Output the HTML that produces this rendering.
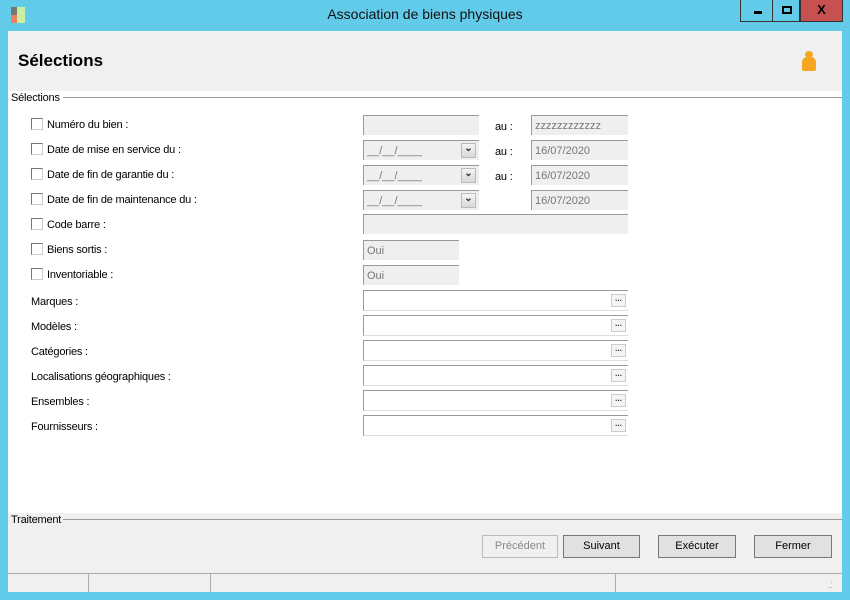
<!DOCTYPE html>
<html><head><meta charset="utf-8"><style>
*{margin:0;padding:0;box-sizing:border-box}
body{width:850px;height:600px;background:#62cbea;font-family:"Liberation Sans",sans-serif;font-size:11px;color:#000;position:relative;overflow:hidden}
.a{position:absolute}
.l{letter-spacing:-0.2px}
.title{left:0;top:6px;width:850px;text-align:center;font-size:14px;color:#111}
.cb{width:12px;height:12px;border:1px solid #777;border-right-color:#ccc;border-bottom-color:#ccc;background:#fff}
.f{background:#efefef;border-top:1px solid #999;border-left:1px solid #999;height:20px;color:#777;font-size:11px;padding:4px 0 0 3px}
.w{background:#fff;border-top:1px solid #999;border-left:1px solid #999;border-bottom:1px solid #ddd;height:21px}
.dd{width:15px;height:15px;background:linear-gradient(#f4f4f4,#d8d8d8);border:1px solid #bbb;font-size:10px;text-align:center;line-height:10px;color:#234;font-weight:bold}
.btn{height:23px;border:1px solid #777;background:#e1e1e1;text-align:center;line-height:21px;font-size:11px}
.dots{width:15px;height:13px;border:1px solid #ccc;background:#f4f4f4;font-size:8px;line-height:8px;text-align:center;color:#333;font-weight:bold}
</style></head><body>
<div class="a" style="left:11px;top:7px;width:6px;height:8px;background:#777"></div>
<div class="a" style="left:11px;top:15px;width:6px;height:8px;background:#f08060"></div>
<div class="a" style="left:17px;top:7px;width:8px;height:16px;background:#c8f0a0"></div>
<div class="a title">Association de biens physiques</div>
<div class="a" style="left:740px;top:0;width:33px;height:22px;border:1px solid #333;border-top:none"><div class="a" style="left:13px;top:11px;width:8px;height:3px;background:#000"></div></div>
<div class="a" style="left:772px;top:0;width:28px;height:22px;border:1px solid #333;border-top:none"><div class="a" style="left:9px;top:6px;width:10px;height:8px;border:2px solid #000"></div></div>
<div class="a" style="left:800px;top:0;width:43px;height:22px;background:#c75050;border:1px solid #333;border-top:none;text-align:center;font-weight:bold;font-size:13px;line-height:20px">X</div>
<div class="a" style="left:8px;top:31px;width:834px;height:561px;background:#f0f0f0"></div>
<div class="a" style="left:18px;top:51px;font-size:17px;font-weight:bold">Sélections</div>
<div class="a" style="left:805px;top:51px;width:8px;height:7px;border-radius:50%;background:#f5a623"></div>
<div class="a" style="left:802px;top:57px;width:14px;height:14px;border-radius:5px 5px 2px 2px;background:#f5a623"></div>
<div class="a" style="left:8px;top:91px;width:834px;height:422px;background:#fff"></div>
<div class="a l" style="left:11px;top:92px">Sélections</div>
<div class="a" style="left:63px;top:97px;width:779px;height:1px;background:#999"></div>
<div class="a l" style="left:11px;top:514px">Traitement</div>
<div class="a" style="left:63px;top:519px;width:779px;height:1px;background:#999"></div>

<div class="a cb" style="left:31px;top:118px"></div><div class="a l" style="left:47px;top:119px">Numéro du bien :</div>
<div class="a cb" style="left:31px;top:143px"></div><div class="a l" style="left:47px;top:144px">Date de mise en service du :</div>
<div class="a cb" style="left:31px;top:168px"></div><div class="a l" style="left:47px;top:169px">Date de fin de garantie du :</div>
<div class="a cb" style="left:31px;top:193px"></div><div class="a l" style="left:47px;top:194px">Date de fin de maintenance du :</div>
<div class="a cb" style="left:31px;top:218px"></div><div class="a l" style="left:47px;top:219px">Code barre :</div>
<div class="a cb" style="left:31px;top:243px"></div><div class="a l" style="left:47px;top:244px">Biens sortis :</div>
<div class="a cb" style="left:31px;top:268px"></div><div class="a l" style="left:47px;top:269px">Inventoriable :</div>
<div class="a l" style="left:31px;top:296px">Marques :</div>
<div class="a l" style="left:31px;top:321px">Modèles :</div>
<div class="a l" style="left:31px;top:346px">Catégories :</div>
<div class="a l" style="left:31px;top:371px">Localisations géographiques :</div>
<div class="a l" style="left:31px;top:396px">Ensembles :</div>
<div class="a l" style="left:31px;top:421px">Fournisseurs :</div>

<div class="a f" style="left:363px;top:115px;width:116px"></div>
<div class="a l" style="left:495px;top:121px">au :</div>
<div class="a f" style="left:531px;top:115px;width:97px">zzzzzzzzzzzz</div>

<div class="a f" style="left:363px;top:140px;width:116px">__/__/____</div>
<div class="a dd" style="left:461px;top:143px">&#x2304;</div>
<div class="a l" style="left:495px;top:146px">au :</div>
<div class="a f" style="left:531px;top:140px;width:97px">16/07/2020</div>

<div class="a f" style="left:363px;top:165px;width:116px">__/__/____</div>
<div class="a dd" style="left:461px;top:168px">&#x2304;</div>
<div class="a l" style="left:495px;top:171px">au :</div>
<div class="a f" style="left:531px;top:165px;width:97px">16/07/2020</div>

<div class="a f" style="left:363px;top:190px;width:116px">__/__/____</div>
<div class="a dd" style="left:461px;top:193px">&#x2304;</div>
<div class="a f" style="left:531px;top:190px;width:97px">16/07/2020</div>

<div class="a f" style="left:363px;top:214px;width:265px"></div>
<div class="a f" style="left:363px;top:240px;width:96px">Oui</div>
<div class="a f" style="left:363px;top:265px;width:96px">Oui</div>

<div class="a w" style="left:363px;top:290px;width:265px"><div class="a dots" style="left:247px;top:3px">...</div></div>
<div class="a w" style="left:363px;top:315px;width:265px"><div class="a dots" style="left:247px;top:3px">...</div></div>
<div class="a w" style="left:363px;top:340px;width:265px"><div class="a dots" style="left:247px;top:3px">...</div></div>
<div class="a w" style="left:363px;top:365px;width:265px"><div class="a dots" style="left:247px;top:3px">...</div></div>
<div class="a w" style="left:363px;top:390px;width:265px"><div class="a dots" style="left:247px;top:3px">...</div></div>
<div class="a w" style="left:363px;top:415px;width:265px"><div class="a dots" style="left:247px;top:3px">...</div></div>

<div class="a btn" style="left:482px;top:535px;width:76px;border-color:#bbb;background:#f0f0f0;color:#888">Précédent</div>
<div class="a btn" style="left:563px;top:535px;width:77px">Suivant</div>
<div class="a btn" style="left:658px;top:535px;width:78px">Exécuter</div>
<div class="a btn" style="left:754px;top:535px;width:78px">Fermer</div>

<div class="a" style="left:8px;top:573px;width:834px;height:1px;background:#aaa"></div>
<div class="a" style="left:88px;top:574px;width:1px;height:18px;background:#aaa"></div>
<div class="a" style="left:210px;top:574px;width:1px;height:18px;background:#aaa"></div>
<div class="a" style="left:615px;top:574px;width:1px;height:18px;background:#aaa"></div>
<div class="a" style="left:828px;top:578px;font-size:9px;color:#999;line-height:5px">&nbsp;.<br>..</div>
</body></html>
